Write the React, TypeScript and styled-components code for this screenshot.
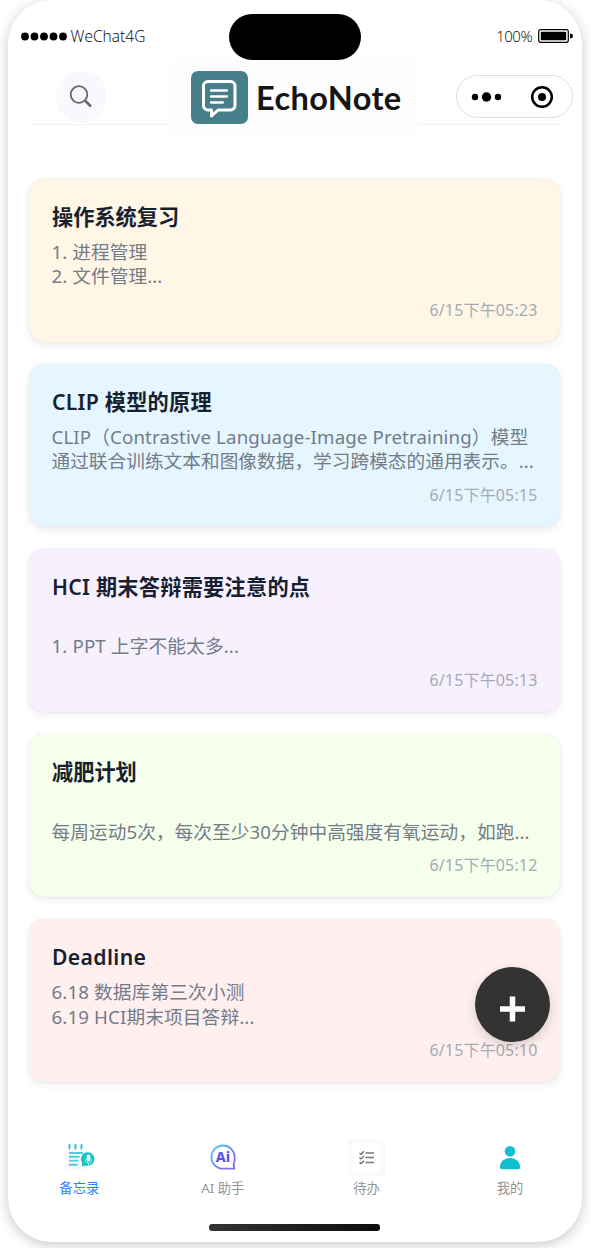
import React from 'react';
import styled, { createGlobalStyle } from 'styled-components';

const Global = createGlobalStyle`
  * { box-sizing: border-box; }
  body { margin: 0; background: #fff; overflow: hidden; font-family: "Noto Sans", "Noto Sans CJK SC", sans-serif; }
`;
const Stage = styled.div`
  height: 1248px; padding: 0 9px 0 7.5px; overflow: hidden;
`;
const Phone = styled.main`
  height: 1242px; border-radius: 44px; background: #fff; display: flex; flex-direction: column;
  box-shadow: 0 3px 13px rgba(0,0,0,.22);
`;
const StatusBar = styled.div`
  height: 59px; flex: none; display: grid; grid-template-columns: 221.5px 132px 1fr;
`;
const Carrier = styled.div`
  display: flex; align-items: center; padding: 11px 0 0 13px; gap: 4px;
`;
const Label = styled.span<{ $size: number; $spacing: number }>`
  font-family: "Open Sans", "Noto Sans", sans-serif; font-weight: 300; color: #000; white-space: nowrap;
  font-size: ${p => p.$size}px; letter-spacing: ${p => p.$spacing}px; line-height: 20px;
`;
const Island = styled.div`
  height: 46px; margin-top: 14px; border-radius: 23px; background: #000; position: relative;
`;
const Battery = styled(Carrier)`
  justify-content: flex-end; padding: 11px 8px 0 0; gap: 6px;
`;
const Header = styled.header`
  height: 77px; flex: none; display: flex; align-items: center; padding-left: 48px;
  background: linear-gradient(#f3f3f3, #f3f3f3) 20.5px 65px / 532px 1px no-repeat;
`;
const SearchButton = styled.button`
  width: 51px; height: 52px; border: 0; border-radius: 50%; background: #f7f9fc; padding: 0;
  display: flex; align-items: center; justify-content: center; margin: 0 64.5px 2px 0;
`;
const Brand = styled.div`
  width: 248px; height: 77px; background: #fdfdfd; display: flex; align-items: center; padding-left: 20px; gap: 8px;
`;
const BrandName = styled.span`
  font-family: Lato, "Noto Sans", sans-serif; font-weight: 700; font-size: 32.5px; letter-spacing: .4px; line-height: 40px; color: #151515;
`;
const Capsule = styled.div`
  width: 117px; height: 43px; margin: 0 0 2px 36.5px; border: 1px solid #dedede; border-radius: 22px; background: #fff;
  display: flex; align-items: center; padding-left: 14px; gap: 28px;
`;
const Notes = styled.section`
  padding: 43px 22px 0 21.5px; display: flex; flex-direction: column; gap: 22.1px; flex: 1;
`;
const Card = styled.article<{ $bg: string }>`
  height: 163px; flex: none; padding: 22px 22.5px 0 23px; border-radius: 15px; background: ${p => p.$bg};
  box-shadow: 0 3px 9px rgba(0,0,0,.075), 0 0 1.5px rgba(0,0,0,.12); display: flex; flex-direction: column;
`;
const Title = styled.h2<{ $spacing: number }>`
  margin: 0; font-size: 21.2px; line-height: 31.4px; font-weight: 600; color: #171f30; letter-spacing: ${p => p.$spacing}px; white-space: nowrap;
`;
const Excerpt = styled.div`
  margin-top: 7.6px; height: 49px;
`;
const Line = styled.p<{ $spacing: number }>`
  margin: 0 0 0 -.5px; height: 24.3px; line-height: 24.3px; font-size: 18.7px; color: #747b89; white-space: nowrap;
  letter-spacing: ${p => p.$spacing}px; font-weight: 400;
`;
const Stamp = styled.time`
  align-self: flex-end; margin-top: 8.5px; line-height: 24px; font-size: 16px; letter-spacing: .16px; color: #a5abb6; white-space: nowrap;
`;
const AddButton = styled.button`
  position: absolute; left: 474.5px; top: 967px; width: 75px; height: 75px; border: 0; border-radius: 50%; padding: 0;
  background: #333; box-shadow: 0 4px 12px rgba(0,0,0,.16);
`;
const TabBar = styled.nav`
  height: 76px; flex: none; display: grid; grid-template-columns: repeat(4, 143.6px);
`;
const Tab = styled.div<{ $active?: boolean }>`
  display: flex; flex-direction: column; align-items: center; gap: 4px;
  font-size: 13.3px; line-height: 18px; color: ${p => (p.$active ? '#2f80ff' : '#949494')};
  svg { display: block; }
`;
const HomeRow = styled.div`
  height: 27px; flex: none; display: flex; justify-content: center; align-items: flex-start; padding-top: 9px;
`;
const HomeBar = styled.div`
  width: 171px; height: 7px; border-radius: 3px; background: linear-gradient(90deg, #333, #0c0c0c);
`;

type Note = { title: string; ts: number; bg: string; lines: [string, number][]; time: string };
const notes: Note[] = [
  { title: '操作系统复习', ts: 0, bg: '#fff6e5', lines: [['1. 进程管理', 0.05], ['2. 文件管理...', 0.05]], time: '6/15下午05:23' },
  { title: 'CLIP 模型的原理', ts: 0.25, bg: '#e5f6ff', lines: [['CLIP（Contrastive Language-Image Pretraining）模型', 0.12], ['通过联合训练文本和图像数据，学习跨模态的通用表示。...', 0]], time: '6/15下午05:15' },
  { title: 'HCI 期末答辩需要注意的点', ts: 0.25, bg: '#f7f0ff', lines: [['', 0], ['1. PPT 上字不能太多...', 0.13]], time: '6/15下午05:13' },
  { title: '减肥计划', ts: 0, bg: '#f5ffeb', lines: [['', 0], ['每周运动5次，每次至少30分钟中高强度有氧运动，如跑...', 0.04]], time: '6/15下午05:12' },
  { title: 'Deadline', ts: 0.35, bg: '#fff0ef', lines: [['6.18 数据库第三次小测', 0.12], ['6.19 HCI期末项目答辩...', 0.12]], time: '6/15下午05:10' },
];

const MemoIcon = () => (
  <svg width="36" height="36" viewBox="0 0 36 36" fill="none">
    <rect x="4" y="10" width="22" height="21" rx="3" fill="#fdf8f3" />
    <path d="M8.5 6v3.500M14.500 6v3.500M20.500 6v3.500" stroke="#19c2cf" strokeWidth="1.900" strokeLinecap="round" />
    <path d="M8 14h14M8 17.800h10.500M8 21.600h9.500M8 25.800h8.500" stroke="#48cfd6" strokeWidth="1.900" />
    <path d="M21 27.500v-3.800A6.800 6.800 0 1 1 25 26.600l-4 .9Z" fill="#17c0cd" />
    <rect x="25.500" y="15.500" width="4" height="7" rx="2" fill="#d9f7f6" />
    <path d="M24 20.500a3.500 3.500 0 0 0 7 0M27.500 24v2" stroke="#a5e8e8" />
  </svg>
);
const AiIcon = () => (
  <svg width="36" height="36" viewBox="0 0 36 36" fill="none">
    <defs>
      <linearGradient id="ring" x1="6" y1="8" x2="30" y2="30" gradientUnits="userSpaceOnUse">
        <stop stopColor="#48cdf2" /><stop offset=".55" stopColor="#6b87f7" /><stop offset="1" stopColor="#8068ef" />
      </linearGradient>
    </defs>
    <path d="M18 6.500A11.600 11.600 0 1 0 18 29.700H29.300L28.600 25.500C30 22.500 29.800 20 29.600 18A11.600 11.600 0 0 0 18 6.500Z" stroke="url(#ring)" strokeWidth="1.800" strokeLinejoin="round" />
    <text x="18" y="22.900" textAnchor="middle" fontFamily="Noto Sans, sans-serif" fontWeight="800" fontSize="14" fill="#5656ef">Ai</text>
  </svg>
);
const TodoIcon = () => (
  <svg width="37" height="36" viewBox="0 0 37 36" fill="none" overflow="visible">
    <rect width="37" height="37" fill="#fafafa" /><rect x="4.500" y="4.500" width="28" height="28" fill="#fff" />
    <path d="M17.500 14H26M17.500 18.500H26M17.500 23.500H26" stroke="#777" strokeWidth="1.400" />
    <path d="m11.500 14 1.500 1.300 3-3m-4.500 6.300 1.500 1.300 3-3m-4.500 6.500 1.500 1.300 3-3" stroke="#666" strokeWidth="1.300" />
  </svg>
);
const MeIcon = () => (
  <svg width="36" height="36" viewBox="0 0 36 36" fill="#11bfd0">
    <circle cx="18" cy="12.200" r="5.300" />
    <path d="M8 28c0-5.500 4.300-9 10-9s10 3.500 10 9c0 1.500-.7 2.200-2 2.200H10c-1.300 0-2-.7-2-2.200Z" />
  </svg>
);

export default function App() {
  return (
    <>
      <Global />
      <Stage>
        <Phone>
          <StatusBar>
            <Carrier>
              <svg width="46" height="10" viewBox="0 0 46 10">
                {[4, 13.5, 23, 32.5, 42].map(x => <circle key={x} cx={x} cy="5.500" r="3.900" />)}
              </svg>
              <Label $size={15.5} $spacing={0.05}>WeChat4G</Label>
            </Carrier>
            <Island />
            <Battery>
              <Label $size={15} $spacing={-0.5}>100%</Label>
              <svg width="36" height="14" viewBox="0 0 36 14">
                <rect x=".7" y=".7" width="29.600" height="12.600" rx="2" fill="none" stroke="#000" strokeWidth="1.200" />
                <rect x="2.800" y="2.800" width="25.400" height="8.400" rx="1" />
                <path d="M32 4.500q3 .3 3 2.500t-3 2.500Z" />
              </svg>
            </Battery>
          </StatusBar>
          <Header>
            <SearchButton aria-label="search">
              <svg width="24" height="24" viewBox="0 0 24 24" fill="none" stroke="#666">
                <circle cx="10" cy="9.500" r="8.300" strokeWidth="1.800" /><path d="m15.800 15.300 6.200 6.200" strokeWidth="2.500" />
              </svg>
            </SearchButton>
            <Brand>
              <svg width="57" height="53" viewBox="0 0 57 53" fill="none">
                <rect width="57" height="53" rx="7" fill="#467f8a" />
                <path d="M17 10.500H39.500a4.500 4.500 0 0 1 4.500 4.500V34.500a4.500 4.500 0 0 1-4.500 4.500H27L20.500 45V39H17a4.500 4.500 0 0 1-4.500-4.500V15a4.500 4.500 0 0 1 4.500-4.500Z" stroke="#fff" strokeWidth="3" strokeLinejoin="round" />
                <path d="M20 19.500H36M20 25.500H36M20 31.500H32" stroke="#fff" strokeWidth="2.300" strokeLinecap="round" />
              </svg>
              <BrandName>EchoNote</BrandName>
            </Brand>
            <Capsule>
              <svg width="31" height="10" viewBox="0 0 31 10"><circle cx="4" cy="5" r="3.200" /><circle cx="15.500" cy="5" r="4.700" /><circle cx="27" cy="5" r="3.200" /></svg>
              <svg width="24" height="24" viewBox="0 0 24 24"><circle cx="12" cy="12" r="9.800" fill="none" stroke="#000" strokeWidth="2.500" /><circle cx="12" cy="12" r="4" /></svg>
            </Capsule>
          </Header>
          <Notes>
            {notes.map(n => (
              <Card key={n.title} $bg={n.bg}>
                <Title $spacing={n.ts}>{n.title}</Title>
                <Excerpt>{n.lines.map(([t, s], i) => <Line key={i} $spacing={s}>{t}</Line>)}</Excerpt>
                <Stamp>{n.time}</Stamp>
              </Card>
            ))}
          </Notes>
          <TabBar>
            <Tab $active><MemoIcon />备忘录</Tab>
            <Tab><AiIcon />AI 助手</Tab>
            <Tab><TodoIcon />待办</Tab>
            <Tab><MeIcon />我的</Tab>
          </TabBar>
          <HomeRow><HomeBar /></HomeRow>
        </Phone>
      </Stage>
      <AddButton aria-label="add">
        <svg width="75" height="75" viewBox="0 0 75 75"><path d="M37.500 29.500V54.500M25 42H50" stroke="#fff" strokeWidth="5.500" /></svg>
      </AddButton>
    </>
  );
}
